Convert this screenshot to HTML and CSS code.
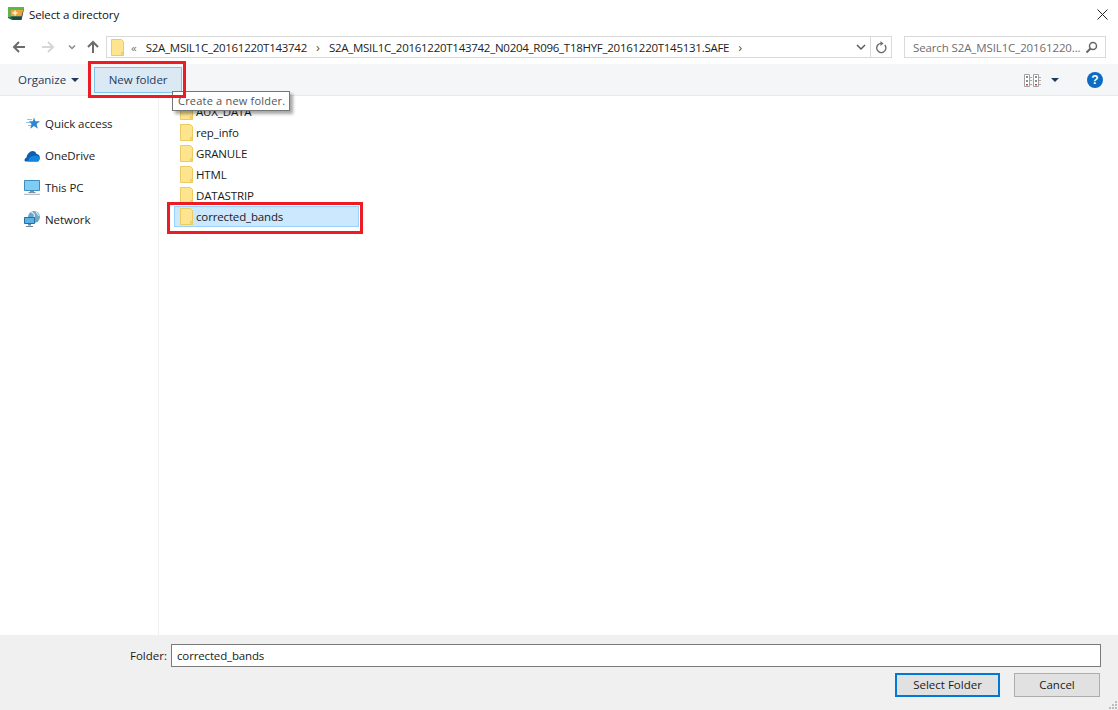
FILE: index.html
```html
<!DOCTYPE html>
<html lang="en">
<head>
<meta charset="utf-8">
<title>Select a directory</title>
<link rel="stylesheet" href="styles.css">
</head>
<body>
<svg class="defs" width="0" height="0" aria-hidden="true">
  <symbol id="folder" viewBox="0 0 13 17">
    <path d="M.5.5h10l2 2v14H.5z" fill="#fde58f" stroke="#eccb62"/>
    <path d="M10.5 13.5h2v3h-2z" fill="#f6d778" stroke="#eccb62"/>
  </symbol>
</svg>
<div class="dialog">
  <header class="titlebar">
    <svg class="app-icon" width="16" height="15" viewBox="0 0 16 15"><path d="M0 0h16l-3 13H4l-4-2z" fill="#1c6f63"/><path d="M0 0h16l-.500 2.500H2.500V10H0z" fill="#58b947"/><path d="M2.500 2.500h13l-2 7h-11z" fill="#eda53a"/><path d="M3 9.500h10.500l-1 3.500H5z" fill="#134f4f"/><path d="M12.500 13l3-10.500.500-.500-2.500 11z" fill="#333"/><path d="M4.500 6h5M7 3.500v5" stroke="#fff3d0" stroke-width="1.500"/></svg>
    <span class="title">Select a directory</span>
    <svg class="close" width="11" height="11" viewBox="0 0 11 11"><path d="M.5.5l10 10M10.500.5l-10 10" stroke="#222" fill="none"/></svg>
  </header>

  <nav class="navbar">
    <svg class="nav-icon" width="14" height="14" viewBox="0 0 14 14"><path d="M13 7H2M7 2L2 7l5 5" fill="none" stroke="#6b6b6b" stroke-width="2"/></svg>
    <svg class="nav-icon" width="14" height="14" viewBox="0 0 14 14"><path d="M1 7h11M7 2l5 5-5 5" fill="none" stroke="#d6d6d6" stroke-width="2"/></svg>
    <svg class="nav-drop" width="8" height="6" viewBox="0 0 8 6"><path d="M1 1.500l3 3 3-3" fill="none" stroke="#8a8a8a" stroke-width="1.500"/></svg>
    <svg class="nav-icon" width="14" height="14" viewBox="0 0 14 14"><path d="M7 13V2M2 7l5-5 5 5" fill="none" stroke="#6b6b6b" stroke-width="2"/></svg>
    <div class="address">
      <svg class="addr-folder" width="13" height="17"><use href="#folder"/></svg>
      <span class="crumb-more">«</span>
      <span class="crumb">S2A_MSIL1C_20161220T143742</span>
      <span class="sep">›</span>
      <span class="crumb">S2A_MSIL1C_20161220T143742_N0204_R096_T18HYF_20161220T145131.SAFE</span>
      <span class="sep">›</span>
      <span class="addr-spacer"></span>
      <svg width="10" height="7" viewBox="0 0 10 7"><path d="M1 1l4 4 4-4" fill="none" stroke="#5a5a5a" stroke-width="1.500"/></svg>
      <span class="addr-refresh">
        <svg width="12" height="13" viewBox="0 0 12 13"><path d="M9.800 4A4.600 4.600 0 1 1 6.500 2.400" fill="none" stroke="#6e6e6e" stroke-width="1.400"/><path d="M5.500 0v5l3-2.500z" fill="#6e6e6e"/></svg>
      </span>
    </div>
    <div class="search">
      <span class="search-text">Search S2A_MSIL1C_20161220...</span>
      <svg width="13" height="13" viewBox="0 0 13 13"><circle cx="8" cy="5" r="3.500" fill="none" stroke="#666" stroke-width="1.500"/><path d="M5.500 7.500L1.500 11.500" stroke="#666" stroke-width="2"/></svg>
    </div>
  </nav>

  <div class="toolbar">
    <span class="organize">Organize<i class="caret"></i></span>
    <span class="new-folder">New folder</span>
    <span class="toolbar-spacer"></span>
    <svg class="views" width="18" height="13" viewBox="0 0 18 13">
      <path d="M.5.500h5v12h-5zM9.500.500h5v12h-5z" fill="#fff" stroke="#a2a2a2"/>
      <path d="M2 2h2v2H2zM2 6h2v2H2zM11 2h2v2h-2zM11 6h2v2h-2z" fill="#8c8c8c"/>
      <path d="M2 10h2v1.500H2zM11 10h2v1.500h-2z" fill="#b5504f"/>
      <path d="M6 3h2v1H6zM6 6h2v1H6zM6 10h2v1H6zM15 3h2v1h-2zM15 6h2v1h-2zM15 10h2v1h-2z" fill="#a8a8a8"/>
    </svg>
    <i class="caret views-caret"></i>
    <span class="help">?</span>
  </div>

  <main class="body">
    <aside class="sidebar">
      <div class="side-item">
        <svg width="16" height="15" viewBox="0 0 16 15"><path d="M10 1.500l1.400 3.800H16l-3.400 2.800 1.200 4.600-3.800-2.700-3.800 2.700 1.300-4.600L5 5.300h3.800z" fill="#2d86cf"/><path d="M3 3.500h5M2 6.500h4M4 9.500h3" stroke="#8cc6ee"/></svg>
        <span>Quick access</span>
      </div>
      <div class="side-item">
        <svg width="16" height="15" viewBox="0 0 16 15"><path d="M1 13.500C0 12 .6 10 2.500 9.500 3 6 6 3 8.500 3c2 0 3.500 1.200 4 3 1.800 0 3.300 1.500 3.300 3.500 0 2-1 4-2.300 4z" fill="#0b5fb0"/><path d="M4 13.500c0-3 2-5 4.500-5.500 2.500-.5 5-.5 7 1 .5 2-.5 4.500-2 4.500z" fill="#1584dc"/></svg>
        <span>OneDrive</span>
      </div>
      <div class="side-item">
        <svg width="16" height="15" viewBox="0 0 16 15"><path d="M.5.500h15v10H.500z" fill="#7fcdf2" stroke="#3a8fc0"/><path d="M6 11h4v1.500H6z" fill="#6f95ad"/><path d="M4.500 12.500h7" stroke="#7d8f9b"/><path d="M0 14.500h16" stroke="#b6bec4" stroke-width="1.500"/></svg>
        <span>This PC</span>
      </div>
      <div class="side-item">
        <svg width="16" height="16" viewBox="0 0 16 16"><circle cx="10" cy="6" r="6" fill="#6ea6c9"/><path d="M7 .800c2 1.200 4 2 3.500 4.200C10 7 8 7 8.500 9M12 1l3 4" fill="none" stroke="#d8ebf6" stroke-width="1.200"/><path d="M.5 6.500h10v6h-10z" fill="#5cb2e6" stroke="#236f9e"/><path d="M4 13h3v1.500H4zM2 15h7v1H2z" fill="#6a8798"/></svg>
        <span>Network</span>
      </div>
    </aside>
    <section class="files">
      <div class="file"><svg width="13" height="17"><use href="#folder"/></svg><span>AUX_DATA</span></div>
      <div class="file"><svg width="13" height="17"><use href="#folder"/></svg><span>rep_info</span></div>
      <div class="file"><svg width="13" height="17"><use href="#folder"/></svg><span>GRANULE</span></div>
      <div class="file"><svg width="13" height="17"><use href="#folder"/></svg><span>HTML</span></div>
      <div class="file"><svg width="13" height="17"><use href="#folder"/></svg><span>DATASTRIP</span></div>
      <div class="file selected"><svg width="13" height="17"><use href="#folder"/></svg><span>corrected_bands</span></div>
    </section>
  </main>

  <footer class="footer">
    <div class="folder-row">
      <label class="folder-label" for="folder-name">Folder:</label>
      <input class="folder-input" id="folder-name" value="corrected_bands">
    </div>
    <div class="buttons">
      <button class="btn primary">Select Folder</button>
      <button class="btn">Cancel</button>
    </div>
    <svg class="grip" width="9" height="9" viewBox="0 0 9 9"><path d="M6 0h2v2H6zM3 3h2v2H3zM6 3h2v2H6zM0 6h2v2H0zM3 6h2v2H3zM6 6h2v2H6z" fill="#bdbdbd"/></svg>
  </footer>

  <div class="tooltip">Create a new folder.</div>
  <div class="mark mark-button"></div>
  <div class="mark mark-row"></div>
</div>
</body>
</html>
```
FILE: styles.css
```css
* { box-sizing: border-box; }
html, body { margin: 0; height: 100%; }
body {
  font-family: "Open Sans", "Noto Sans", "Liberation Sans", sans-serif;
  font-size: 11.500px;
  color: #1a1a1a;
  background: #fff;
  overflow: hidden;
}
.defs { position: absolute; }
svg { flex: none; display: block; }
.dialog {
  position: relative;
  width: 1118px;
  height: 710px;
  display: flex;
  flex-direction: column;
}
.titlebar {
  height: 30px;
  flex: none;
  display: flex;
  align-items: center;
  padding: 0 10px 1px 8px;
  gap: 5px;
}
.title { flex: 1; color: #111; letter-spacing: -.12px; }
.navbar {
  height: 34px;
  flex: none;
  display: flex;
  align-items: center;
  padding: 0 12px;
}
.nav-icon + .nav-icon { margin-left: 15px; }
.nav-drop { margin: 0 10px 0 13px; }
.address {
  margin-left: 6px;
  width: 786px;
  height: 22px;
  border: 1px solid #d9d9d9;
  display: flex;
  align-items: center;
  padding-left: 4px;
}
.addr-folder { margin-right: 7px; }
.crumb-more { color: #777; margin-right: 9px; }
.crumb { color: #222; letter-spacing: -.27px; }
.sep { color: #555; font-size: 13px; margin: 0 9px; }
.addr-spacer { flex: 1; }
.addr-refresh {
  margin-left: 4px;
  width: 21px;
  height: 20px;
  border-left: 1px solid #d9d9d9;
  display: flex;
  align-items: center;
  justify-content: center;
}
.search {
  margin-left: 12px;
  width: 202px;
  height: 22px;
  border: 1px solid #d9d9d9;
  display: flex;
  align-items: center;
  justify-content: space-between;
  padding: 0 7px 0 8px;
  color: #6d6d6d;
}
.search-text { letter-spacing: -.12px; white-space: nowrap; }
.toolbar {
  height: 32px;
  flex: none;
  display: flex;
  align-items: center;
  background: #f5f6f7;
  border-bottom: 1px solid #e8e9ea;
  padding: 0 15px 0 18px;
}
.organize { color: #1e3a5c; display: flex; align-items: center; }
.caret {
  display: block;
  width: 0;
  height: 0;
  margin-left: 5px;
  border: 4px solid transparent;
  border-top: 4px solid #1e3a5c;
  border-bottom: 0;
}
.new-folder {
  margin-left: 15px;
  width: 88px;
  height: 26px;
  display: flex;
  align-items: center;
  justify-content: center;
  background: #dbe9f4;
  border: 1px solid #7fc4ea;
  color: #1e3a5c;
}
.toolbar-spacer { flex: 1; }
.views-caret { margin: 0 0 0 9px; }
.views { margin-top: 1px; }
.help {
  margin-left: 28px;
  width: 16px;
  height: 16px;
  border-radius: 50%;
  background: #0a6cc4;
  color: #fff;
  font: bold 12px/16px "Liberation Sans", sans-serif;
  text-align: center;
}
.body { flex: 1; display: flex; min-height: 0; }
.sidebar {
  width: 159px;
  flex: none;
  border-right: 1px solid #f0f0f0;
  padding: 16px 0 0 24px;
  display: flex;
  flex-direction: column;
  gap: 10px;
}
.side-item {
  height: 22px;
  display: flex;
  align-items: center;
  gap: 5px;
  letter-spacing: -.06px;
}
.files {
  flex: 1;
  padding: 5px 0 0 15px;
  display: flex;
  flex-direction: column;
}
.file {
  width: 185px;
  height: 21px;
  display: flex;
  align-items: center;
  gap: 3px;
  padding-left: 5px;
  border: 1px solid transparent;
}
.file span { letter-spacing: -.15px; }
.selected { background: #cce8ff; border-color: #99d1ff; }
.footer {
  position: relative;
  flex: none;
  height: 75px;
  background: #f0f0f0;
  padding: 9px 17px 0 0;
  display: flex;
  flex-direction: column;
}
.folder-row { display: flex; align-items: center; }
.folder-label { margin-left: 130px; width: 41px; }
.folder-input {
  flex: 1;
  height: 23px;
  border: 1px solid #7a7a7a;
  background: #fff;
  padding: 0 5px;
  font: inherit;
  letter-spacing: -.15px;
  color: #1a1a1a;
  outline: none;
}
.buttons {
  margin-top: 6px;
  padding-right: 1px;
  display: flex;
  justify-content: flex-end;
  gap: 14px;
}
.btn {
  width: 86px;
  height: 24px;
  background: #e1e1e1;
  border: 1px solid #adadad;
  font: inherit;
  color: #1a1a1a;
  padding: 0 0 2px;
}
.primary { width: 105px; border: 2px solid #0078d7; }
.grip { position: absolute; right: 0; bottom: 0; }
.tooltip {
  position: absolute;
  left: 172px;
  top: 91px;
  width: 118px;
  height: 20px;
  background: #fff;
  border: 1px solid #767676;
  box-shadow: 3px 3px 3px rgba(0, 0, 0, .35);
  color: #555;
  font-size: 11px;
  letter-spacing: .2px;
  line-height: 18px;
  padding-left: 5px;
  white-space: nowrap;
}
.mark { position: absolute; border: 3px solid #ed1c24; }
.mark-button { left: 88px; top: 61px; width: 98px; height: 37px; }
.mark-row { left: 167px; top: 202px; width: 196px; height: 32px; }
```
